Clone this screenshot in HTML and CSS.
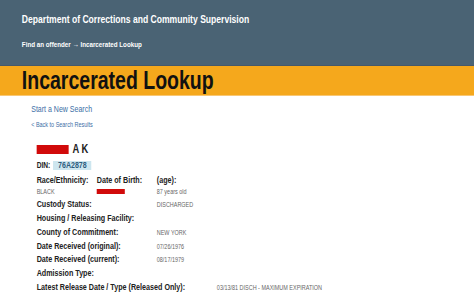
FILE: index.html
```html
<!DOCTYPE html>
<html lang="en">
<head>
    <meta charset="UTF-8">
    <meta name="viewport" content="width=device-width, initial-scale=1.0">
    <title>Incarcerated Lookup</title>
    <link rel="stylesheet" href="styles.css">
</head>
<body>
    <div class="topo">
        <div class="miolo">
            <div class="agencia">Department of Corrections and Community Supervision</div>
            <div class="trilha">Find an offender → Incarcerated Lookup</div>
        </div>
    </div>
    <div class="faixa">
        <div class="miolo">
            <h1>Incarcerated Lookup</h1>
        </div>
    </div>

    <div class="miolo">
        <div class="links">
            <a href="#" class="nova">Start a New Search</a>
            <a href="#" class="voltar">&lt; Back to Search Results</a>
        </div>

        <div class="ficha">
            <div class="nome"><span class="oculto"></span>A K</div>
            <div class="din">DIN: <span class="din-num">76A2878</span></div>

            <div class="tres">
                <div>
                    <div class="rotulo">Race/Ethnicity:</div>
                    <div class="valor">BLACK</div>
                </div>
                <div>
                    <div class="rotulo">Date of Birth:</div>
                    <div class="valor"><span class="oculto pequeno"></span></div>
                </div>
                <div>
                    <div class="rotulo">(age):</div>
                    <div class="valor">87 years old</div>
                </div>
            </div>

            <div class="linha"><span class="rotulo">Custody Status:</span><span class="valor">DISCHARGED</span></div>
            <div class="linha"><span class="rotulo">Housing / Releasing Facility:</span><span class="valor"></span></div>
            <div class="linha"><span class="rotulo">County of Commitment:</span><span class="valor">NEW YORK</span></div>
            <div class="linha"><span class="rotulo">Date Received (original):</span><span class="valor">07/26/1976</span></div>
            <div class="linha"><span class="rotulo">Date Received (current):</span><span class="valor">08/17/1979</span></div>
            <div class="linha"><span class="rotulo">Admission Type:</span><span class="valor"></span></div>
            <div class="linha larga"><span class="rotulo">Latest Release Date / Type (Released Only):</span><span class="valor">03/13/81 DISCH - MAXIMUM EXPIRATION</span></div>
        </div>
    </div>
</body>
</html>
```

FILE: styles.css
```css
body {
    margin: 0;
    overflow: hidden;
    font-family: "Liberation Sans", Arial, sans-serif;
    background: #fff;
    color: #222;
}

/* a captura original foi achatada na horizontal */
.miolo {
    transform: scaleX(0.78);
    transform-origin: 0 0;
}

.topo {
    background: #4a6374;
    height: 66px;
    padding-top: 13px;
    box-sizing: border-box;
    color: #fff;
    font-weight: bold;
    border-bottom: 1px solid #46596a;
}

.topo .miolo {
    padding-left: 28px;
}

.agencia {
    font-size: 11px;
    line-height: 13px;
}

.trilha {
    font-size: 8px;
    line-height: 10px;
    margin-top: 14px;
}

.faixa {
    background: #f5a81c;
    height: 29px;
    border-bottom: 1px solid #f8c774;
}

.faixa .miolo {
    padding-left: 28px;
}

h1 {
    margin: 0;
    font-size: 25px;
    line-height: 29px;
    color: #111;
}

.links {
    padding: 8px 0 0 40px;
    display: flex;
    flex-direction: column;
}

.links a {
    color: #3b6ea6;
    text-decoration: none;
}

.nova {
    font-size: 9px;
    line-height: 11px;
}

.voltar {
    font-size: 7px;
    line-height: 9px;
    margin-top: 5px;
}

.ficha {
    padding: 13px 0 0 47px;
}

.nome {
    display: flex;
    align-items: center;
    font-size: 12px;
    font-weight: bold;
    line-height: 14px;
}

.oculto {
    display: inline-block;
    width: 41px;
    height: 9px;
    margin-top: 1px;
    background: #d10a0a;
    margin-right: 5px;
}

.oculto.pequeno {
    width: 36px;
    height: 5px;
    margin: 2px 0 0;
}

.din {
    display: flex;
    align-items: center;
    font-size: 8.5px;
    font-weight: bold;
    margin-top: 5px;
    line-height: 9px;
}

.din-num {
    display: inline-block;
    background: #cde6ef;
    color: #2d5d7e;
    font-size: 9px;
    padding: 0 6px;
    margin-left: 4px;
}

.rotulo {
    font-size: 9.2px;
    line-height: 11px;
    font-weight: bold;
    color: #222;
}

.valor {
    font-size: 7px;
    line-height: 9px;
    color: #666;
}

.tres {
    display: grid;
    grid-template-columns: 77px 77px auto;
    margin-top: 5px;
    margin-bottom: 2px;
}

.tres .valor {
    height: 9px;
    margin-top: 1px;
}

.linha {
    display: grid;
    grid-template-columns: 154px auto;
    align-items: center;
    height: 13.75px;
}

.linha.larga {
    grid-template-columns: 231px auto;
}
```
